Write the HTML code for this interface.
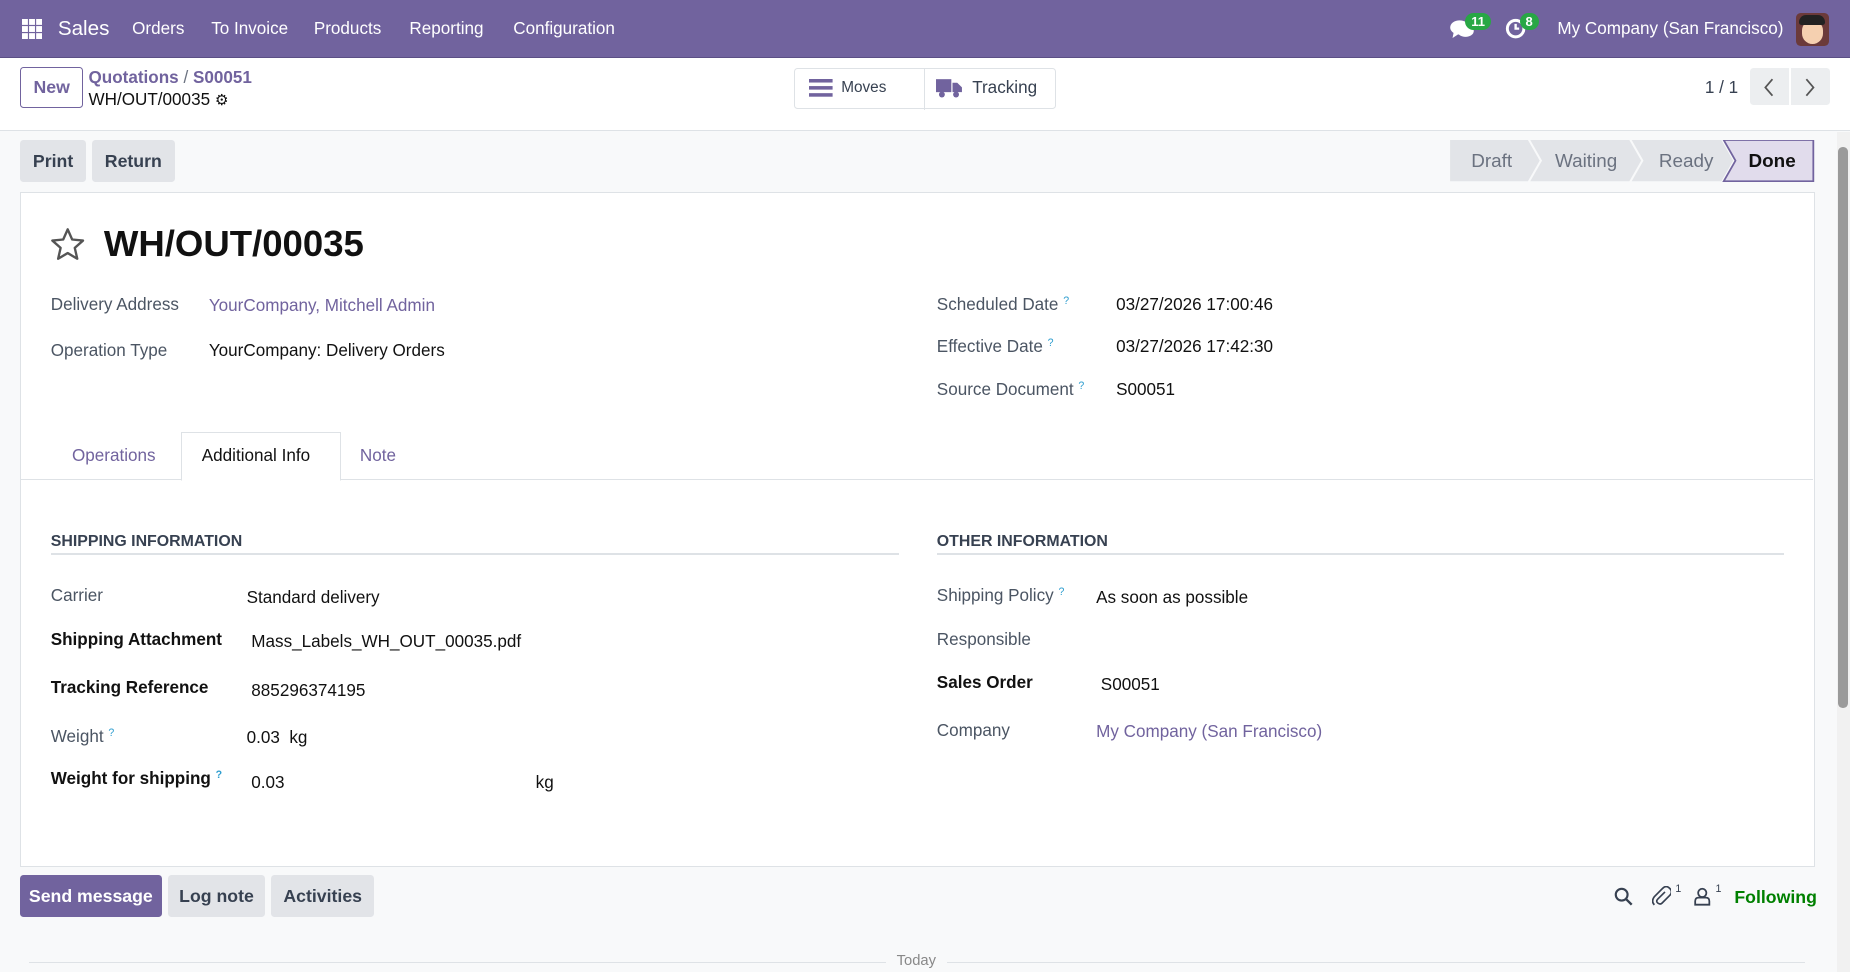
<!DOCTYPE html>
<html><head><meta charset="utf-8"><style>
html{zoom:1.17985}
body{margin:0;width:1568px;height:824px;overflow:hidden;background:#f8f9fa;font-family:"Liberation Sans","DejaVu Sans",sans-serif;font-size:14.5px;color:#374151;position:relative}
.a{position:absolute;white-space:nowrap}
.nav{position:absolute;left:0;top:0;width:1568px;height:48px;background:#71639e;color:#fff;border-bottom:1px solid #5b4f85}
.cp{position:absolute;left:0;top:49px;width:1568px;height:61px;background:#fff;border-bottom:1px solid #dee2e6}
.btn{position:absolute;border-radius:3px;display:flex;align-items:center;justify-content:center;font-weight:bold;font-size:15px}
.gray{background:#e2e4e8;color:#374151}
.sheet{position:absolute;left:17px;top:163px;width:1520px;height:570px;background:#fff;border:1px solid #dee2e6}
.lbl{color:#4b5563}
.b{font-weight:bold;color:#111}
.lnk{color:#71639e}
.q{color:#2f9ecf;font-size:9px;vertical-align:top}
.sep{position:absolute;height:1px;background:#dee2e6}
.badge{position:absolute;background:#28a745;color:#fff;font-size:11px;font-weight:bold;border-radius:9px;padding:1px 5px}
</style></head><body>
<div class="nav">
<svg class="a" style="left:19px;top:16px" width="17" height="17" viewBox="0 0 17 17" fill="#fff"><rect x="0" y="0" width="5" height="5"/><rect x="6" y="0" width="5" height="5"/><rect x="12" y="0" width="5" height="5"/><rect x="0" y="6" width="5" height="5"/><rect x="6" y="6" width="5" height="5"/><rect x="12" y="6" width="5" height="5"/><rect x="0" y="12" width="5" height="5"/><rect x="6" y="12" width="5" height="5"/><rect x="12" y="12" width="5" height="5"/></svg>
<div class="a" style="left:49px;top:14px;font-size:17.5px">Sales</div>
<div class="a" style="left:112px;top:16px;font-size:14.5px">Orders</div>
<div class="a" style="left:179px;top:16px">To Invoice</div>
<div class="a" style="left:266px;top:16px">Products</div>
<div class="a" style="left:347px;top:16px">Reporting</div>
<div class="a" style="left:435px;top:16px">Configuration</div>
<svg class="a" style="left:1228px;top:15px" width="22" height="18" viewBox="0 0 22 18" fill="#fff"><ellipse cx="9" cy="8" rx="8" ry="6"/><path d="M4 12 L3 17 L9 13Z"/><ellipse cx="14" cy="11" rx="7" ry="5"/></svg>
<div class="badge" style="left:1242px;top:11px">11</div>
<svg class="a" style="left:1276px;top:15px" width="18" height="18" viewBox="0 0 18 18"><circle cx="9" cy="9" r="7" fill="none" stroke="#fff" stroke-width="2.5"/><path d="M9 5v4h3" stroke="#fff" stroke-width="2" fill="none"/></svg>
<div class="badge" style="left:1288px;top:11px">8</div>
<div class="a" style="left:1320px;top:16px">My Company (San Francisco)</div>
<div class="a" style="left:1522px;top:11px;width:28px;height:28px;border-radius:4px;background:#6b3a3a;overflow:hidden"><div style="position:absolute;left:5px;top:6px;width:18px;height:20px;border-radius:9px;background:#f5d0b0"></div><div style="position:absolute;left:3px;top:2px;width:22px;height:8px;background:#222;border-radius:6px 6px 2px 2px"></div></div>
</div>
<div class="cp">
<div class="btn" style="left:17px;top:8px;width:52px;height:33px;border:1px solid #71639e;color:#71639e;background:#fff">New</div>
<div class="a lnk" style="left:75px;top:9px;font-weight:bold">Quotations <span style="color:#6b7280;font-weight:normal">/</span> S00051</div>
<div class="a" style="left:75px;top:27px;color:#111">WH/OUT/00035 <span style="font-size:13px">⚙</span></div>
<div class="a" style="left:673px;top:9px;width:220px;height:33px;border:1px solid #dee2e6;border-radius:3px"></div>
<div class="a" style="left:783px;top:9px;width:1px;height:35px;background:#dee2e6"></div>
<svg class="a" style="left:686px;top:18px" width="20" height="16" viewBox="0 0 20 16" fill="#71639e"><rect y="0" width="20" height="3"/><rect y="6" width="20" height="3"/><rect y="12" width="20" height="3"/></svg>
<div class="a" style="left:713px;top:18px;font-size:13px;color:#374151">Moves</div>
<svg class="a" style="left:793px;top:17px" width="22" height="17" viewBox="0 0 22 17" fill="#71639e"><rect x="0" y="1" width="13" height="11"/><path d="M14 4h4l4 4v4h-8z"/><circle cx="5" cy="14" r="2.5"/><circle cx="17" cy="14" r="2.5"/></svg>
<div class="a" style="left:824px;top:17px;color:#374151">Tracking</div>
<div class="a" style="left:1445px;top:17px;color:#374151">1 / 1</div>
<div class="a" style="left:1483px;top:9px;width:33px;height:31px;background:#eceef0;border-radius:3px 0 0 3px"></div>
<div class="a" style="left:1518px;top:9px;width:33px;height:31px;background:#eceef0;border-radius:0 3px 3px 0"></div>
<svg class="a" style="left:1494px;top:17px" width="10" height="16" viewBox="0 0 10 16"><path d="M8 1L2 8l6 7" fill="none" stroke="#555" stroke-width="1.5"/></svg>
<svg class="a" style="left:1529px;top:17px" width="10" height="16" viewBox="0 0 10 16"><path d="M2 1l6 7-6 7" fill="none" stroke="#555" stroke-width="1.5"/></svg>
</div>
<div class="btn gray" style="left:17px;top:119px;width:56px;height:35px">Print</div>
<div class="btn gray" style="left:78px;top:119px;width:70px;height:35px">Return</div>
<svg class="a" style="left:1229px;top:119px" width="310" height="35" viewBox="0 0 310 35">
<path d="M0 0H66L76 17.5 66 35H0Z" fill="#e2e4e8"/>
<path d="M68 0H152L162 17.5 152 35H68L78 17.5Z" fill="#e2e4e8"/>
<path d="M154 0H230L240 17.5 230 35H154L164 17.5Z" fill="#e2e4e8"/>
<path d="M232 0H308V35H232L242 17.5Z" fill="#e1dcec" stroke="#71639e" stroke-width="1.5"/>
</svg>
<div class="a" style="left:1247px;top:127px;font-size:16px;color:#6b7280">Draft</div>
<div class="a" style="left:1318px;top:127px;font-size:16px;color:#6b7280">Waiting</div>
<div class="a" style="left:1406px;top:127px;font-size:16px;color:#6b7280">Ready</div>
<div class="a" style="left:1482px;top:127px;font-size:16px;color:#111;font-weight:bold">Done</div>
<div style="position:absolute;left:1557px;top:112px;width:11px;height:712px;background:#f1f1f1"></div>
<div style="position:absolute;left:1558px;top:125px;width:8px;height:475px;background:#9a9a9a;border-radius:4px"></div>
<div class="sheet"></div>
<svg class="a" style="left:42px;top:192px" width="30" height="29" viewBox="0 0 30 29"><path d="M15 2l3.8 8.6 9.2.9-7 6.2 2.1 9.2L15 22.1 6.9 26.9 9 17.7 2 11.5l9.2-.9z" fill="none" stroke="#555" stroke-width="2" stroke-linejoin="round"/></svg>
<div class="a" style="left:88px;top:189px;font-size:31px;font-weight:bold;color:#111">WH/OUT/00035</div>
<div class="a lbl" style="left:43px;top:250px">Delivery Address</div>
<div class="a lnk" style="left:177px;top:251px">YourCompany, Mitchell Admin</div>
<div class="a lbl" style="left:43px;top:289px">Operation Type</div>
<div class="a" style="left:177px;top:289px;color:#111">YourCompany: Delivery Orders</div>
<div class="a lbl" style="left:794px;top:250px">Scheduled Date <span class="q">?</span></div>
<div class="a" style="left:946px;top:250px;color:#111">03/27/2026 17:00:46</div>
<div class="a lbl" style="left:794px;top:286px">Effective Date <span class="q">?</span></div>
<div class="a" style="left:946px;top:286px;color:#111">03/27/2026 17:42:30</div>
<div class="a lbl" style="left:794px;top:322px">Source Document <span class="q">?</span></div>
<div class="a" style="left:946px;top:322px;color:#111">S00051</div>
<div class="sep" style="left:18px;top:406px;width:1519px"></div>
<div class="a" style="left:153px;top:366px;width:134px;height:40px;background:#fff;border:1px solid #dee2e6;border-bottom:1px solid #fff"></div>
<div class="a lnk" style="left:61px;top:378px">Operations</div>
<div class="a" style="left:171px;top:378px;color:#111">Additional Info</div>
<div class="a lnk" style="left:305px;top:378px">Note</div>
<div class="a b" style="left:43px;top:452px;font-size:13.5px;color:#374151">SHIPPING INFORMATION</div>
<div class="sep" style="left:43px;top:469px;width:719px"></div>
<div class="a b" style="left:794px;top:452px;font-size:13.5px;color:#374151">OTHER INFORMATION</div>
<div class="sep" style="left:794px;top:469px;width:718px"></div>
<div class="a lbl" style="left:43px;top:497px">Carrier</div>
<div class="a" style="left:209px;top:498px;color:#111">Standard delivery</div>
<div class="a b" style="left:43px;top:534px">Shipping Attachment</div>
<div class="a" style="left:213px;top:536px;color:#111">Mass_Labels_WH_OUT_00035.pdf</div>
<div class="a b" style="left:43px;top:575px">Tracking Reference</div>
<div class="a" style="left:213px;top:577px;color:#111">885296374195</div>
<div class="a lbl" style="left:43px;top:616px">Weight <span class="q">?</span></div>
<div class="a" style="left:209px;top:617px;color:#111">0.03 &nbsp;kg</div>
<div class="a b" style="left:43px;top:652px">Weight for shipping <span class="q">?</span></div>
<div class="a" style="left:213px;top:655px;color:#111">0.03</div>
<div class="a" style="left:454px;top:655px;color:#111">kg</div>
<div class="a lbl" style="left:794px;top:497px">Shipping Policy <span class="q">?</span></div>
<div class="a" style="left:929px;top:498px;color:#111">As soon as possible</div>
<div class="a lbl" style="left:794px;top:534px">Responsible</div>
<div class="a b" style="left:794px;top:570px">Sales Order</div>
<div class="a" style="left:933px;top:572px;color:#111">S00051</div>
<div class="a lbl" style="left:794px;top:611px">Company</div>
<div class="a lnk" style="left:929px;top:612px">My Company (San Francisco)</div>
<div class="btn" style="left:17px;top:742px;width:120px;height:35px;background:#71639e;color:#fff">Send message</div>
<div class="btn gray" style="left:142px;top:742px;width:83px;height:35px">Log note</div>
<div class="btn gray" style="left:230px;top:742px;width:87px;height:35px">Activities</div>
<svg class="a" style="left:1368px;top:752px" width="16" height="16" viewBox="0 0 16 16"><circle cx="6.5" cy="6.5" r="5" fill="none" stroke="#374151" stroke-width="1.8"/><path d="M10 10l5 5" stroke="#374151" stroke-width="2"/></svg>
<svg class="a" style="left:1400px;top:751px" width="16" height="18" viewBox="0 0 16 18"><path d="M11 5L5 11q-2 2 0 3.5t3.5 0L15 8q3-3 0-6t-6 0L2 9q-3 4 0 7" fill="none" stroke="#374151" stroke-width="1.4"/></svg>
<div class="a" style="left:1420px;top:748px;font-size:9px;color:#374151">1</div>
<svg class="a" style="left:1436px;top:752px" width="14" height="16" viewBox="0 0 14 16"><circle cx="7" cy="5" r="3.5" fill="none" stroke="#374151" stroke-width="1.5"/><path d="M1 15v-3q0-3 3-3h6q3 0 3 3v3z" fill="none" stroke="#374151" stroke-width="1.5"/></svg>
<div class="a" style="left:1454px;top:748px;font-size:9px;color:#374151">1</div>
<div class="a" style="left:1470px;top:752px;color:#008000;font-weight:bold;font-size:15px">Following</div>
<div class="sep" style="left:25px;top:815px;width:726px"></div>
<div class="sep" style="left:803px;top:815px;width:727px"></div>
<div class="a" style="left:760px;top:808px;font-size:12.5px;color:#888">Today</div>
</body></html>
